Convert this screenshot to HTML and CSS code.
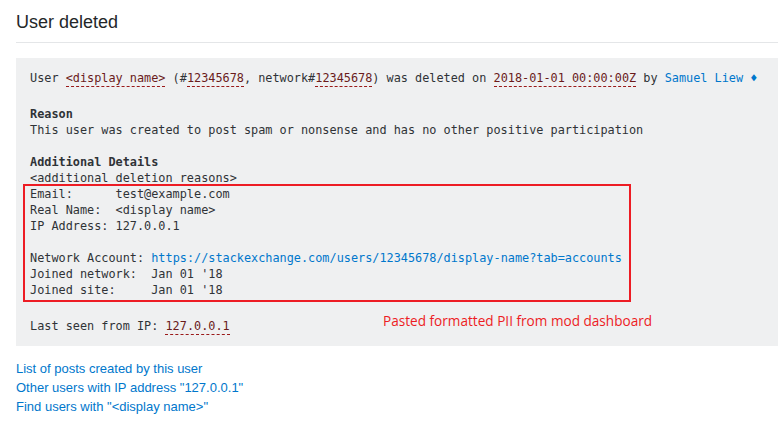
FILE: index.html
```html
<!DOCTYPE html>
<html>
<head>
<meta charset="utf-8">
<link rel="stylesheet" href="styles.css">
</head>
<body>
<div class="page">
  <h1 class="title">User deleted</h1>
  <div class="box">
    <div class="line first">User <span class="dotted">&lt;display name&gt;</span> (#<span class="dotted">12345678</span>, network#<span class="dotted">12345678</span>) was deleted on <span class="dotted">2018-01-01 00:00:00Z</span> by <a class="link" href="#">Samuel Liew ♦</a></div>
    <div class="block">
      <div class="line bold">Reason</div>
      <div class="line">This user was created to post spam or nonsense and has no other positive participation</div>
      <div class="line">&nbsp;</div>
      <div class="line bold">Additional Details</div>
      <div class="line">&lt;additional deletion reasons&gt;</div>
      <div class="pii">
        <div class="line">Email:      test@example.com</div>
        <div class="line">Real Name:  &lt;display name&gt;</div>
        <div class="line">IP Address: 127.0.0.1</div>
        <div class="line">&nbsp;</div>
        <div class="line">Network Account: <a class="link" href="#">https://stackexchange.com/users/12345678/display-name?tab=accounts</a></div>
        <div class="line">Joined network:  Jan 01 '18</div>
        <div class="line">Joined site:     Jan 01 '18</div>
      </div>
    </div>
    <div class="lastseen">
      <div class="line">Last seen from IP: <span class="dotted">127.0.0.1</span></div>
      <span class="note">Pasted formatted PII from mod dashboard</span>
    </div>
  </div>
  <ul class="links">
    <li><a href="#">List of posts created by this user</a></li>
    <li><a href="#">Other users with IP address "127.0.0.1"</a></li>
    <li><a href="#">Find users with "&lt;display name&gt;"</a></li>
  </ul>
</div>
</body>
</html>
```
FILE: styles.css
```css
html, body {
  margin: 0;
  padding: 0;
  background: #ffffff;
  overflow: hidden;
}
.page {
  padding-left: 16px;
  width: 800px;
  font-family: "Liberation Sans", Arial, sans-serif;
}
.title {
  margin: 0;
  padding: 10px 0 8px 0;
  font-size: 18px;
  font-weight: normal;
  line-height: 24px;
  color: #242729;
  border-bottom: 1px solid #e4e6e8;
}
.box {
  margin-top: 15px;
  background: #eff0f1;
  padding: 12px 14px 12px 14px;
  font-family: "DejaVu Sans Mono", "Liberation Mono", monospace;
  font-size: 11.85px;
  color: #2f3337;
}
.line {
  line-height: 16px;
  height: 16px;
  white-space: pre;
}
.first {
  margin-bottom: 20px;
}
.bold {
  font-weight: bold;
}
.dotted {
  color: #6a1b1b;
  border-bottom: 1px dashed #9a1a1a;
  padding-bottom: 1px;
}
.link {
  color: #0077cc;
  text-decoration: none;
}
.pii {
  box-sizing: border-box;
  width: 608px;
  margin: -2px 0 -4px -7px;
  padding: 0 0 2px 5px;
  border: 2px solid #ed1c24;
}
.lastseen {
  position: relative;
  margin-top: 20px;
}
.note {
  position: absolute;
  left: 353px;
  top: -7px;
  font-family: "Open Sans", sans-serif;
  font-size: 13.6px;
  line-height: 20px;
  color: #ed1c24;
  white-space: nowrap;
}
.links {
  list-style: none;
  margin: 13px 0 0 0;
  padding: 0;
  font-size: 13px;
  line-height: 19px;
}
.links a {
  color: #0077cc;
  text-decoration: none;
}
```
